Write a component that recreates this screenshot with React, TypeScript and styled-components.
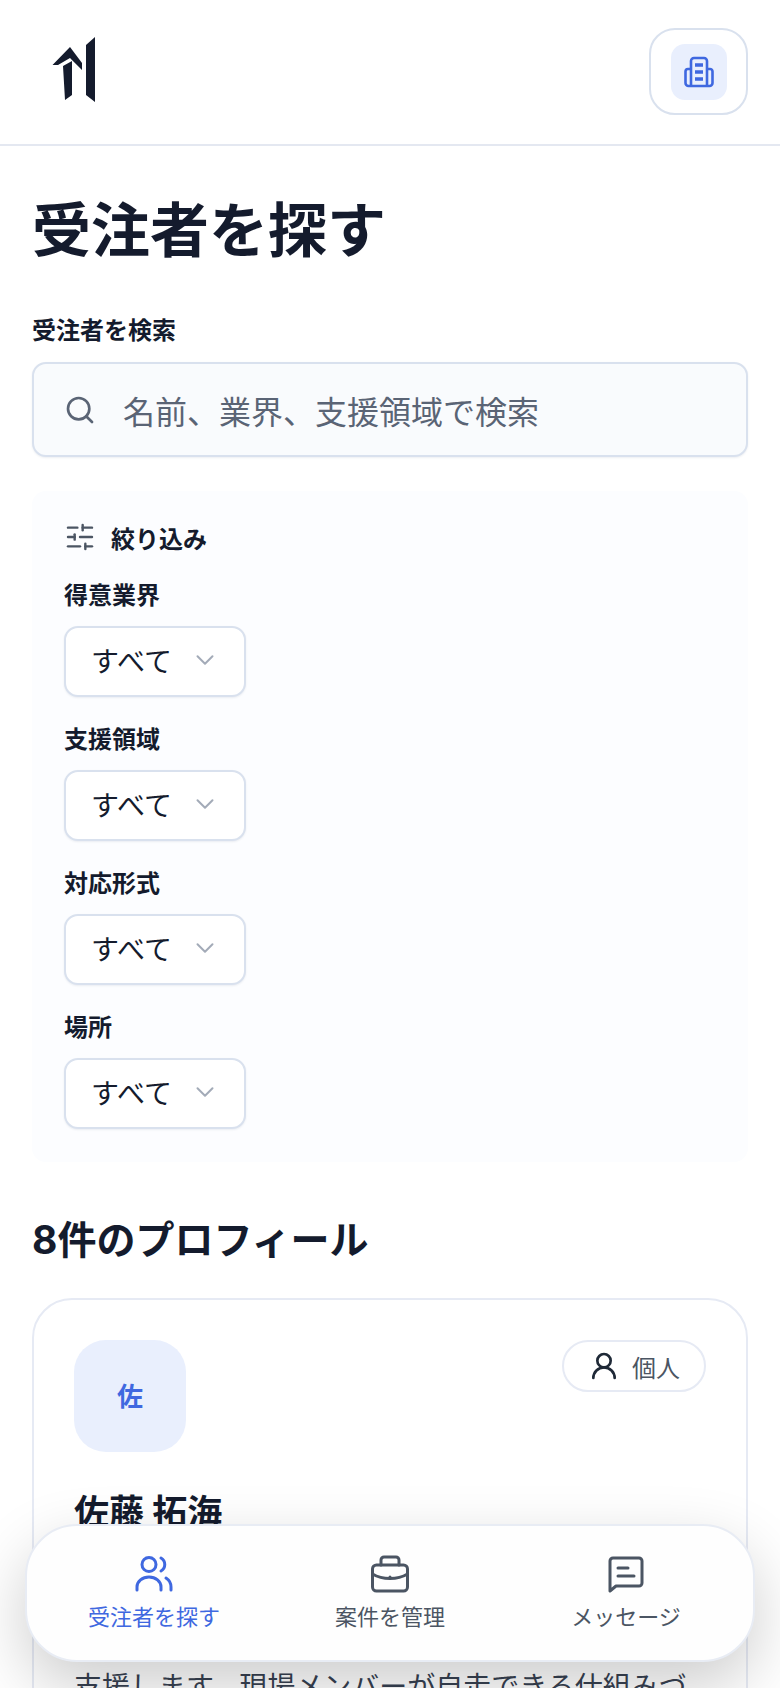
import styled, { createGlobalStyle } from "styled-components";
import { Search, SlidersHorizontal, ChevronDown, UserRound } from "lucide-react";

const GlobalStyle = createGlobalStyle`
  html, body {
    margin: 0;
    padding: 0;
    height: 100%;
    overflow: hidden;
    background: #ffffff;
  }
  * {
    box-sizing: border-box;
  }
  body {
    font-family: Inter, "Noto Sans CJK JP", sans-serif;
    color: #141b2d;
  }
`;

const Page = styled.div`
  position: relative;
  width: 780px;
  height: 1688px;
  overflow: hidden;
`;

const Header = styled.header`
  height: 146px;
  padding: 28px 32px 0 49px;
  display: flex;
  justify-content: space-between;
  align-items: flex-start;
  border-bottom: 2px solid #e4e8f1;
`;

const Logo = styled.svg`
  width: 46px;
  height: 66px;
  margin-top: 8px;
`;

const AccountButton = styled.button`
  width: 99px;
  height: 87px;
  padding: 0;
  background: #fff;
  border: 2px solid #d9e1ee;
  border-radius: 26px;
  display: flex;
  align-items: center;
  justify-content: center;
`;

const AccountIcon = styled.span`
  width: 56px;
  height: 56px;
  border-radius: 14px;
  background: #e9effd;
  display: flex;
  align-items: center;
  justify-content: center;
`;

const Main = styled.main`
  padding: 51px 32px 0;
`;

const Title = styled.h1`
  margin: 0;
  font-size: 59px;
  line-height: 68px;
  font-weight: 700;
`;

const SearchLabel = styled.div`
  margin-top: 50px;
  font-size: 24px;
  line-height: 32px;
  font-weight: 700;
`;

const SearchBox = styled.div`
  margin-top: 15px;
  height: 95px;
  padding: 0 30px;
  display: flex;
  align-items: center;
  gap: 27px;
  background: #f9fbfd;
  border: 2px solid #d9e1ee;
  border-radius: 14px;
  box-shadow: 0 1px 2px rgba(30, 50, 90, 0.08);
  font-size: 32px;
  color: #5a6475;
`;

const FilterPanel = styled.section`
  margin-top: 34px;
  padding: 26px 32px 33px;
  background: #fcfdff;
  border-radius: 14px;
`;

const FilterTitle = styled.div`
  display: flex;
  align-items: center;
  gap: 15px;
  height: 40px;
  font-size: 24px;
  font-weight: 700;
`;

const FilterField = styled.div`
  margin-top: 23px;

  & + & {
    margin-top: 27px;
  }
`;

const FilterLabel = styled.div`
  font-size: 24px;
  line-height: 32px;
  font-weight: 700;
`;

const Select = styled.div`
  margin-top: 14px;
  width: 182px;
  height: 71px;
  padding: 0 24px 4px 25px;
  display: flex;
  align-items: center;
  justify-content: space-between;
  background: #fff;
  border: 2px solid #d9e1ee;
  border-radius: 14px;
  box-shadow: 0 1px 2px rgba(30, 50, 90, 0.08);
  font-size: 28px;
`;

const ResultHeading = styled.h2`
  margin: 52px 0 0;
  font-size: 39px;
  line-height: 52px;
  font-weight: 700;
`;

const Card = styled.article`
  margin-top: 32px;
  padding: 40px 40px 0;
  height: 560px;
  border: 2px solid #e6eaf4;
  border-radius: 40px;
  background: #fff;
`;

const CardTop = styled.div`
  display: flex;
  justify-content: space-between;
  align-items: flex-start;
`;

const Avatar = styled.div`
  width: 112px;
  height: 112px;
  padding-bottom: 4px;
  border-radius: 32px;
  background: #e9effd;
  color: #3f68e0;
  font-size: 26px;
  font-weight: 700;
  display: flex;
  align-items: center;
  justify-content: center;
`;

const Badge = styled.div`
  width: 144px;
  height: 52px;
  border: 2px solid #e6eaf4;
  border-radius: 26px;
  display: flex;
  align-items: center;
  justify-content: center;
  gap: 12px;
  font-size: 24px;
  color: #4b5563;
`;

const Name = styled.h3`
  margin: 38px 0 0;
  font-size: 35px;
  line-height: 44px;
  font-weight: 700;
`;

const Bio = styled.p`
  margin: 131px 0 0;
  font-size: 28px;
  line-height: 44px;
  color: #374151;
  white-space: nowrap;
`;

const BottomNav = styled.nav`
  position: absolute;
  left: 25px;
  top: 1524px;
  width: 730px;
  height: 138px;
  padding: 0 9px;
  display: grid;
  grid-template-columns: repeat(3, 1fr);
  background: #fefefe;
  border: 2px solid #e8ecf4;
  border-radius: 52px;
  box-shadow: 0 24px 64px rgba(0, 0, 0, 0.2);
`;

const NavItem = styled.div<{ $active?: boolean }>`
  display: flex;
  flex-direction: column;
  align-items: center;
  padding-top: 29px;
  gap: 9px;
  font-size: 22px;
  line-height: 30px;
  color: ${(p) => (p.$active ? "#3f68e0" : "#4b5563")};
`;

const NavIcon = styled.svg`
  width: 40px;
  height: 38px;
  fill: none;
  stroke: currentColor;
  stroke-width: 3;
  stroke-linecap: round;
  stroke-linejoin: round;
`;

const filters = ["得意業界", "支援領域", "対応形式", "場所"];

function App() {
  return (
    <Page>
      <GlobalStyle />
      <Header>
        <Logo viewBox="0 0 46 66">
          <path
            d="M21 11 L33 27 L33 34 L21 22 L9 29 L3.5 29 Z M14 30 L23 25 L23 59 L16 64 Z M37 9 L46 1 L46 66 L37 59 Z"
            fill="#141b2d"
          />
        </Logo>
        <AccountButton>
          <AccountIcon>
            <svg width="30" height="32" viewBox="0 0 30 32" fill="none" stroke="#3f68e0" strokeWidth="2.6" strokeLinejoin="round">
              <path d="M7 30V5a3 3 0 0 1 3-3h10a3 3 0 0 1 3 3v25" />
              <path d="M7 13H4a2.5 2.5 0 0 0-2.5 2.5V27A3 3 0 0 0 4.5 30h21a3 3 0 0 0 3-3V15.5A2.5 2.5 0 0 0 26 13h-3" />
              <path d="M11 9h8M11 16h8M11 23h8" strokeWidth="3.4" />
            </svg>
          </AccountIcon>
        </AccountButton>
      </Header>
      <Main>
        <Title>受注者を探す</Title>
        <SearchLabel>受注者を検索</SearchLabel>
        <SearchBox>
          <Search size={32} strokeWidth={2} color="#5a6475" />
          <span>名前、業界、支援領域で検索</span>
        </SearchBox>
        <FilterPanel>
          <FilterTitle>
            <SlidersHorizontal size={32} strokeWidth={1.8} color="#4b5563" />
            絞り込み
          </FilterTitle>
          {filters.map((label) => (
            <FilterField key={label}>
              <FilterLabel>{label}</FilterLabel>
              <Select>
                すべて
                <ChevronDown size={30} strokeWidth={1.6} color="#a3abb8" />
              </Select>
            </FilterField>
          ))}
        </FilterPanel>
        <ResultHeading>8件のプロフィール</ResultHeading>
        <Card>
          <CardTop>
            <Avatar>佐</Avatar>
            <Badge>
              <UserRound size={32} strokeWidth={2} color="#1f2937" />
              個人
            </Badge>
          </CardTop>
          <Name>佐藤 拓海</Name>
          <Bio>支援します。現場メンバーが自走できる仕組みづ</Bio>
        </Card>
      </Main>
      <BottomNav>
        <NavItem $active>
          <NavIcon viewBox="0 0 40 38">
            <circle cx="15" cy="9.5" r="7" />
            <path d="M3 35v-3a12 10 0 0 1 24 0v3" />
            <path d="M27 3a7.5 7.5 0 0 1 0 13" />
            <path d="M32 23a12 11 0 0 1 5 9v3" />
          </NavIcon>
          <span>受注者を探す</span>
        </NavItem>
        <NavItem>
          <NavIcon viewBox="0 0 40 38">
            <rect x="2.5" y="10" width="35" height="26" rx="4" />
            <path d="M11 10V5a3 3 0 0 1 3-3h12a3 3 0 0 1 3 3v5" />
            <path d="M2.5 19c10 6 25 6 35 0" />
            <path d="M20 22v.5" />
          </NavIcon>
          <span>案件を管理</span>
        </NavItem>
        <NavItem>
          <NavIcon viewBox="0 0 40 38">
            <path d="M4 36V6a3 3 0 0 1 3-3h26a3 3 0 0 1 3 3v22a3 3 0 0 1-3 3H10z" />
            <path d="M12 13h10M12 21h16" />
          </NavIcon>
          <span>メッセージ</span>
        </NavItem>
      </BottomNav>
    </Page>
  );
}

export default App;
